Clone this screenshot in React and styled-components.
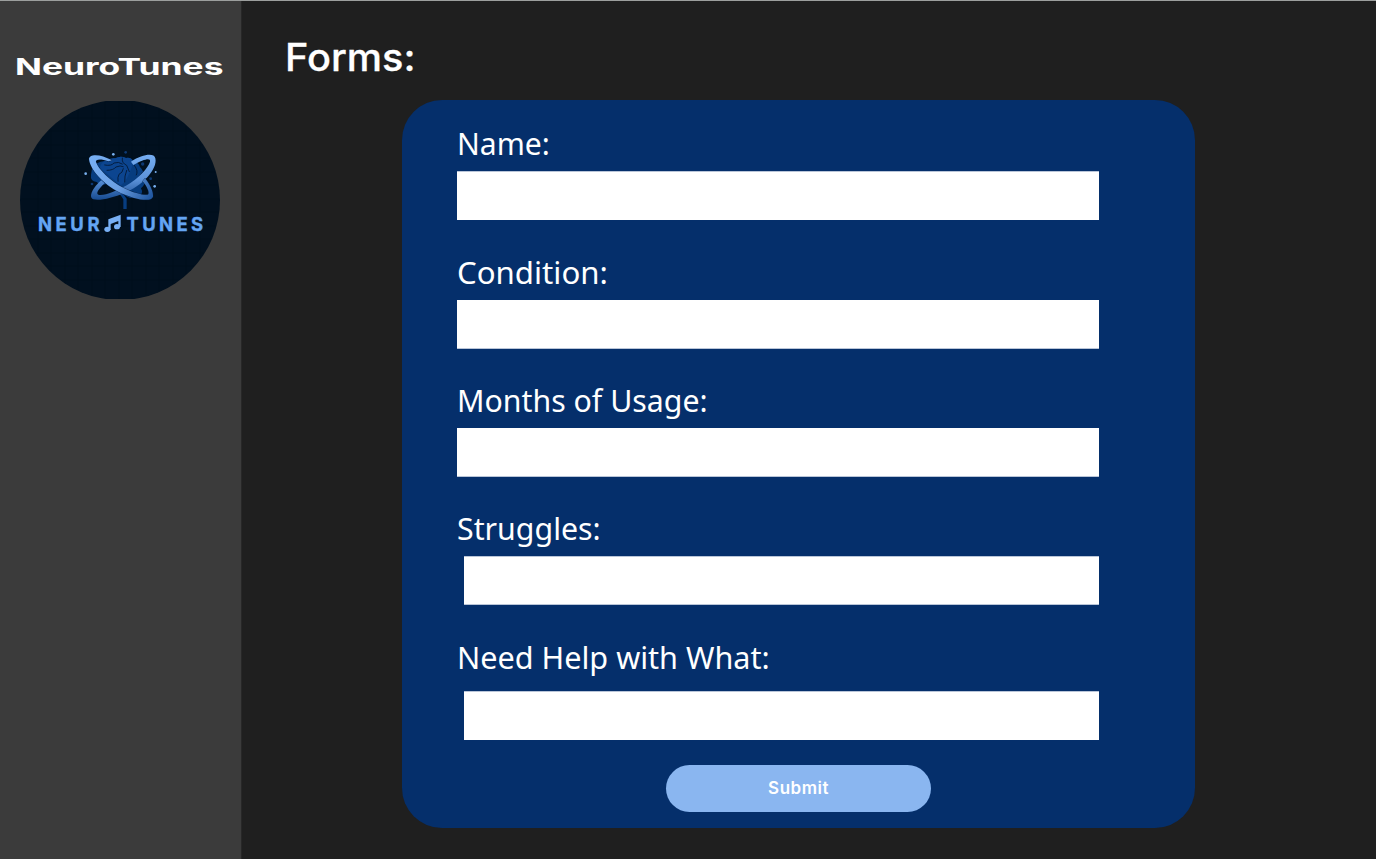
import React from "react";
import styled, { createGlobalStyle } from "styled-components";

const GlobalStyle = createGlobalStyle`
  *, *::before, *::after { box-sizing: border-box; }
  body { margin: 0; background: #1f1f1f; }
`;

const Page = styled.div`
  display: flex;
  width: 100%;
  height: 859px;
  overflow: hidden;
  border-top: 1px solid #9c9f9e;
  background: #1f1f1f;
  color: #fff;
`;

const Sidebar = styled.aside`
  flex: none;
  display: flex;
  flex-direction: column;
  width: 242px;
  padding: 51px 0 0 15px;
  background: #3b3b3b;
  border-right: 1px solid #272727;
`;

const Brand = styled.div`
  height: 30px;
  font: 700 22.5px/30px Inter, sans-serif;
  white-space: nowrap;
  transform-origin: 0 50%;
  transform: scaleX(1.572);
`;

const Logo = styled.svg`
  display: block;
  width: 200px;
  height: 200px;
  margin: 18px 0 0 5px;
`;

const Main = styled.main`
  flex: 1;
  display: flex;
  flex-direction: column;
  padding: 29px 0 0 43px;
`;

const Title = styled.h1`
  align-self: flex-start;
  height: 54px;
  margin: 0;
  font: 500 38px/54px Inter, sans-serif;
  white-space: nowrap;
  transform-origin: 0 50%;
  transform: scaleX(1.045);
  -webkit-text-stroke: 0.3px #fff;
`;

const Card = styled.form`
  display: flex;
  flex-direction: column;
  width: 793.5px;
  height: 728px;
  margin: 16px 0 0 116.5px;
  padding: 23px 0 0 55.5px;
  border-radius: 40px;
  background: #052f6b;
`;

const Field = styled.div`
  display: flex;
  flex-direction: column;
  height: ${(p) => p.$height}px;
`;

const Label = styled.label`
  align-self: flex-start;
  height: 40px;
  margin-bottom: ${(p) => p.$gap}px;
  font: 400 31px/40px "Noto Sans", sans-serif;
  white-space: nowrap;
  transform-origin: 0 50%;
  transform: scaleX(${(p) => p.$stretch});
`;

const Input = styled.input`
  width: ${(p) => (p.$inset ? 634.5 : 642)}px;
  height: 49px;
  margin: 0 0 0 ${(p) => (p.$inset ? 7 : 0)}px;
  padding: 0 12px;
  border: 0 solid #b9c5d8;
  border-top-width: ${(p) => (p.$top ? 1 : 0)}px;
  border-bottom-width: ${(p) => (p.$bottom ? 1 : 0)}px;
  border-radius: 0;
  background: #fff;
  outline: none;
`;

const Submit = styled.button`
  width: 265px;
  height: 47px;
  margin: 0 0 0 209px;
  padding: 0;
  border: 0;
  border-radius: 23.5px;
  background: #8ab6f0;
  color: #fff;
  font: 600 17px/47px Inter, sans-serif;
  letter-spacing: 0.5px;
`;

const fields = [
  { id: "name", label: "Name:", height: 129, gap: 8, top: true, stretch: 0.97 },
  { id: "condition", label: "Condition:", height: 128, gap: 8, bottom: true, stretch: 1.006 },
  { id: "months", label: "Months of Usage:", height: 128, gap: 8, bottom: true, stretch: 0.977 },
  { id: "struggles", label: "Struggles:", height: 129, gap: 8, top: true, bottom: true, inset: true, stretch: 0.978 },
  { id: "help", label: "Need Help with What:", height: 128, gap: 14, top: true, inset: true, stretch: 0.987 },
];

const gridLines = [38, 51, 65, 78, 92, 105, 119, 132, 146, 159, 173, 186, 200];

function NeuroLogo() {
  return (
    <Logo viewBox="20 100 200 200" role="img" aria-label="NeuroTunes">
      <defs>
        <clipPath id="disc">
          <path d="M20 101H220V299H20Z" />
        </clipPath>
        <linearGradient id="ring" x1="0" y1="45" x2="0" y2="180" gradientUnits="userSpaceOnUse">
          <stop offset="0" stopColor="#75adf2" />
          <stop offset=".55" stopColor="#5b91d8" />
          <stop offset="1" stopColor="#164a90" />
        </linearGradient>
        <linearGradient id="band" x1="60" y1="45" x2="245" y2="180" gradientUnits="userSpaceOnUse">
          <stop offset="0" stopColor="#78b0f5" />
          <stop offset=".55" stopColor="#6b9fe2" />
          <stop offset="1" stopColor="#1d539c" />
        </linearGradient>
      </defs>
      <g clipPath="url(#disc)">
        <circle cx="120" cy="200" r="100" fill="#01101f" />
      </g>
      <g stroke="#000a16" strokeWidth="1" opacity=".3">
        {gridLines.map((x) => {
          const h = Math.sqrt(9800 - (x - 120) ** 2);
          return <path key={x} d={`M${x} ${200 - h}V${200 + h}M${120 - h} ${x + 80}H${120 + h}`} />;
        })}
      </g>
      <g transform="translate(70 140) scale(.33333)">
        <path
          d="M66 86Q75 66 105 63Q120 53 136 55Q151 46 168 54Q184 51 190 65Q205 65 210 81Q224 95 222 114Q229 132 213 145Q222 160 205 172Q175 180 158 160L170 176V207H160V178L148 160L110 132Q90 139 80 126Q60 124 63 104Z"
          fill="#073d80"
        />
        <path
          d="M105 63Q120 53 136 55Q151 46 168 54Q184 51 190 65Q183 95 164 126L152 136L90 84Q92 68 105 63Z"
          fill="#0c4590"
        />
        <g fill="none" stroke="#021733" strokeWidth="2.6" strokeLinecap="round">
          <path d="M104 75Q124 79 132 69Q146 64 157 72M111 91Q130 91 138 81Q151 75 160 80M157 54Q154 69 170 76L178 95M160 86Q158 99 147 103Q142 112 144 124M170 91Q163 108 164 126M193 76Q206 93 199 105M218 96Q205 110 202 126M181 144Q195 141 207 130" />
        </g>
        <path
          d="M256 55C264 88 215 139 163 159C129 173 91 183 70 178C53 171 71 140 94 121L104 130C88 145 76 160 85 164C102 169 141 151 168 137C205 117 235 83 240 65C243 52 222 57 190 75L183 65C218 42 253 38 256 55Z"
          fill="url(#ring)"
        />
        <path
          d="M57 57C58 40 93 42 126 61L115 64C93 55 75 57 78 66C84 86 120 123 161 144C194 161 229 168 235 163C239 157 231 139 218 124L225 115C240 132 251 158 249 170C242 189 193 177 151 158C97 132 60 87 57 57Z"
          fill="url(#band)"
          stroke="#041a38"
          strokeWidth="2"
          paintOrder="stroke"
        />
        <g fill="#78b0ef">
          <circle cx="130" cy="43" r="4" />
          <circle cx="47" cy="101" r="4" />
          <circle cx="254" cy="139" r="4" />
          <circle cx="257" cy="96" r="3" />
        </g>
        <g fill="#0d3974">
          <circle cx="167" cy="37" r="4" />
          <circle cx="218" cy="72" r="5" />
          <circle cx="242" cy="116" r="4" />
          <circle cx="66" cy="132" r="4" />
        </g>
      </g>
      <g fill="#64a5f3" stroke="#64a5f3" strokeWidth=".4" fontFamily="Inter, sans-serif" fontWeight="700" fontSize="18.4">
        <text x="38" y="231" textLength="61.5">NEUR</text>
        <text x="126.5" y="231" textLength="76.5">TUNES</text>
      </g>
      <g fill="#78b0f5" transform="translate(30 205) scale(.33333)">
        <ellipse cx="232" cy="73" rx="9" ry="8" />
        <ellipse cx="261" cy="65" rx="9" ry="8" />
        <path d="M235 43L272 29V66H265V48L242 57V75H235Z" />
      </g>
    </Logo>
  );
}

export default function App() {
  return (
    <Page>
      <GlobalStyle />
      <Sidebar>
        <Brand>NeuroTunes</Brand>
        <NeuroLogo />
      </Sidebar>
      <Main>
        <Title>Forms:</Title>
        <Card onSubmit={(e) => e.preventDefault()}>
          {fields.map((f) => (
            <Field key={f.id} $height={f.height}>
              <Label htmlFor={f.id} $gap={f.gap} $stretch={f.stretch}>
                {f.label}
              </Label>
              <Input id={f.id} $inset={f.inset} $top={f.top} $bottom={f.bottom} />
            </Field>
          ))}
          <Submit type="submit">Submit</Submit>
        </Card>
      </Main>
    </Page>
  );
}
